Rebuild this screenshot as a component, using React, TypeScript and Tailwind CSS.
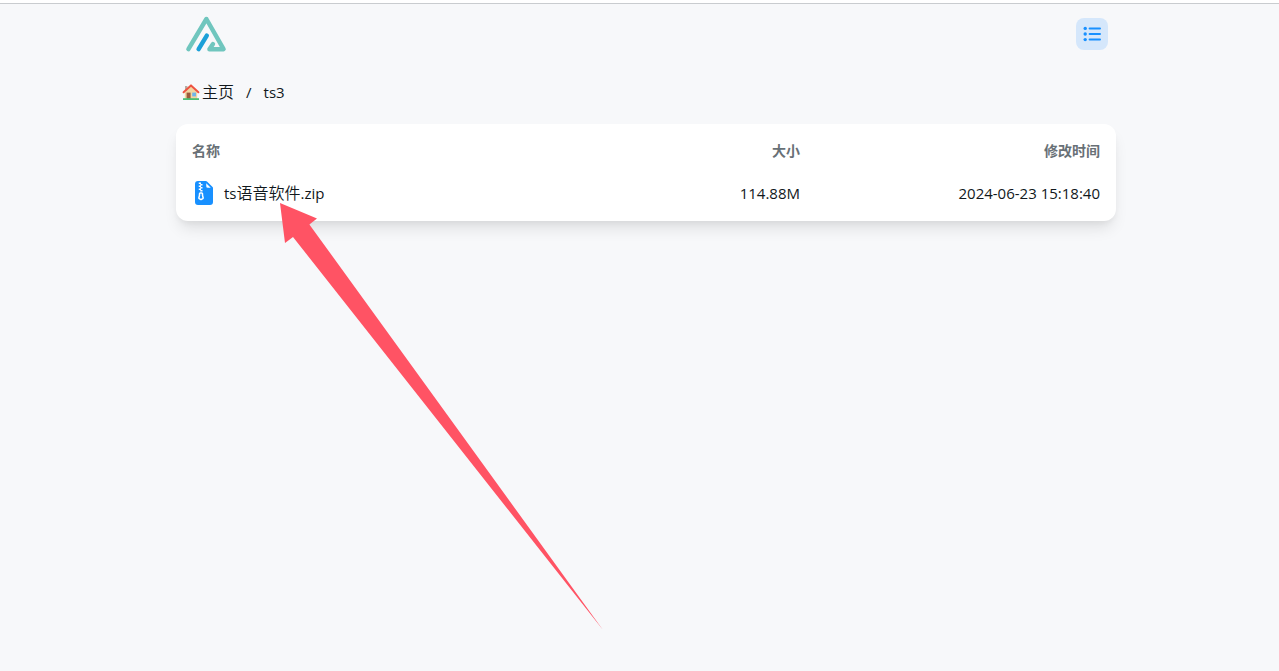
import type { ReactNode } from 'react';
import { BsFileEarmarkZipFill } from 'react-icons/bs';

const files = [
  { name: 'ts语音软件.zip', size: '114.88M', modified: '2024-06-23 15:18:40' },
];

/* Chinese runs are set one step larger than the latin text */
function MixedText({ text }: { text: string }): ReactNode {
  return text
    .split(/([\u4e00-\u9fff]+)/)
    .map((part, i) => (i % 2 ? <span key={i} className="text-[16px] font-[350]">{part}</span> : part));
}

function Logo() {
  return (
    <svg viewBox="0 0 44 40" className="w-11 h-10" fill="none" strokeWidth="4.4" strokeLinecap="round" strokeLinejoin="round" aria-hidden="true">
      <path stroke="#70c6be" d="M4.4 35.2 L22.4 5 L39.6 35.2 H25.4 L29 30" />
      <path stroke="#1ba0d8" d="M14.6 35.2 L22.8 21.6" />
    </svg>
  );
}

function House() {
  return (
    <svg viewBox="0 0 18 18" className="w-[18px] h-[18px]" aria-hidden="true">
      <path fill="#b4ada3" d="M3 3h2.4v5H3z" />
      <path fill="#f3d6a0" d="M9 3.6 2.8 9.4V16h12.4V9.4z" />
      <path fill="#9b5b3c" d="M4.6 9.6h4v6.4h-4z" />
      <path fill="#6fb6ea" d="M10.2 9.6h3.8v3.8h-3.8z" />
      <path fill="#4cbf73" d="M1 15.2h16V17H1z" />
      <path fill="none" stroke="#ee5340" strokeWidth="2" strokeLinecap="round" strokeLinejoin="round" d="M1.6 9.2 9 2.4l7.4 6.8" />
    </svg>
  );
}

function ListIcon() {
  return (
    <svg viewBox="0 0 20 20" className="size-5" fill="currentColor" aria-hidden="true">
      <circle cx="3.2" cy="4.4" r="1.7" />
      <circle cx="3.2" cy="10" r="1.7" />
      <circle cx="3.2" cy="15.6" r="1.7" />
      <rect x="6.6" y="3.4" width="12.4" height="2" rx="1" />
      <rect x="6.6" y="9" width="12.4" height="2" rx="1" />
      <rect x="6.6" y="14.6" width="12.4" height="2" rx="1" />
    </svg>
  );
}

export default function App() {
  return (
    <div className="relative min-h-screen overflow-hidden bg-white pt-[3px] font-['Open_Sans','Noto_Sans_CJK_SC',sans-serif] text-[15px] text-[#11181c]">
      <div className="min-h-screen border-t border-[#c9cccf] bg-[#f7f8fa] pl-[13px]">
        <div className="mx-auto w-full max-w-[940px]">
          <header className="flex h-[60px] items-center justify-between px-2">
            <a href="#home" aria-label="首页"><Logo /></a>
            <button type="button" aria-label="列表视图" className="flex size-8 items-center justify-center rounded-lg bg-[#d5e7fb] text-[#1890ff]">
              <ListIcon />
            </button>
          </header>

          <nav aria-label="路径" className="flex h-[56px] items-center gap-3 px-[6px]">
            <a href="#home" className="flex items-center gap-[2px] text-[16px] font-[350]">
              <House />
              主页
            </a>
            <span>/</span>
            <a href="#ts3">ts3</a>
          </nav>

          <main className="mt-1 rounded-xl bg-white px-4 pt-2 pb-1 shadow-[0_10px_15px_-3px_rgba(0,0,0,0.1),0_4px_6px_-2px_rgba(0,0,0,0.05)]">
            <table className="w-full table-fixed">
              <thead>
                <tr className="h-[37px] text-sm text-[#687076]">
                  <th className="text-left font-bold">名称</th>
                  <th className="w-[200px] text-right font-bold">大小</th>
                  <th className="w-[300px] text-right font-bold">修改时间</th>
                </tr>
              </thead>
              <tbody>
                {files.map((file) => (
                  <tr key={file.name} className="h-12">
                    <td>
                      <a href="#file" className="flex items-center gap-2">
                        <BsFileEarmarkZipFill className="size-6 text-[#1890ff]" />
                        <span><MixedText text={file.name} /></span>
                      </a>
                    </td>
                    <td className="text-right">{file.size}</td>
                    <td className="text-right">{file.modified}</td>
                  </tr>
                ))}
              </tbody>
            </table>
          </main>
        </div>
      </div>

      {/* Arrow pointing at the file to download */}
      <svg viewBox="0 0 323 427" className="pointer-events-none absolute left-[280px] top-[203px] w-[323px] h-[427px]" aria-hidden="true">
        <path fill="#ff5364" d="M0 0 37 15.5 29.4 21.4 323 427 13 34 5 40z" />
      </svg>
    </div>
  );
}
